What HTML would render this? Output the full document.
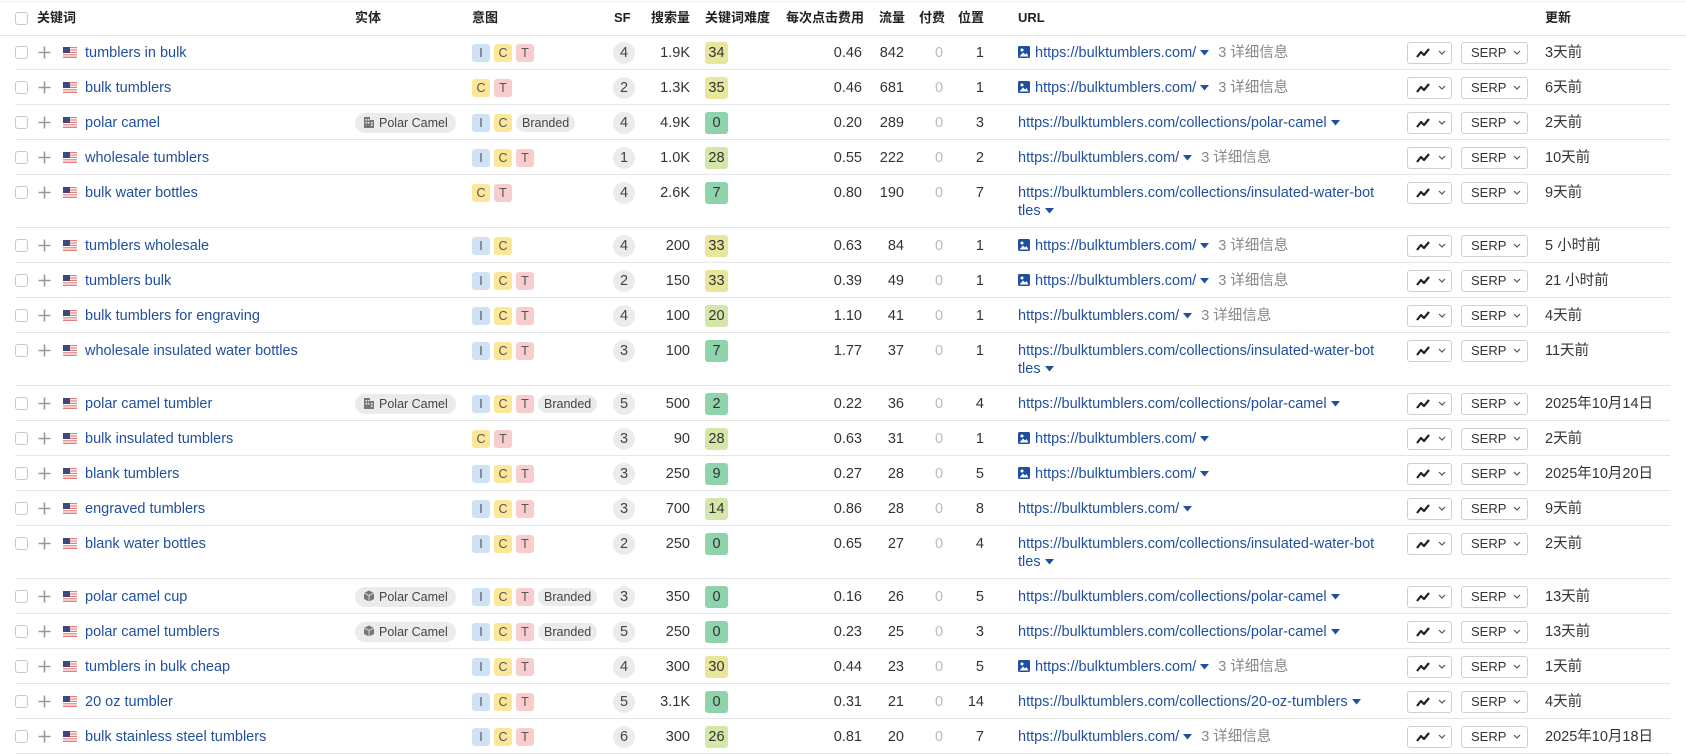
<!DOCTYPE html>
<html><head><meta charset="utf-8">
<style>
*{margin:0;padding:0;box-sizing:border-box}
body{width:1686px;height:756px;background:#fff;font-family:"Liberation Sans","Noto Sans CJK SC",sans-serif;font-size:14.5px;color:#333;position:relative;overflow:hidden}
.a{position:absolute;white-space:nowrap}
.hd{font-weight:bold;font-size:13px;color:#222;top:9px;line-height:18px}
.cb{position:absolute;width:13px;height:13px;border:1px solid #c8c8c8;border-radius:3px;background:#fff}
.sep{position:absolute;height:1px;background:#e6e6e6}
.kw{color:#1f4f9e}
.pill{position:absolute;height:18px;border-radius:3px;font-size:12.5px;line-height:18px;text-align:center;color:#555}
.pI{background:#cfe1f5}.pC{background:#fbe797}.pT{background:#f8cdcd}
.br{background:#ebebeb;border-radius:9px;padding:0 6px;color:#444}
.ent{position:absolute;height:20px;background:#ebebeb;border-radius:10px;font-size:12.5px;line-height:20px;color:#444;padding-left:24px;width:101px}
.sf{position:absolute;width:22px;height:22px;border-radius:11px;background:#ebebeb;text-align:center;line-height:22px;color:#444}
.kd{position:absolute;width:23px;height:22px;border-radius:3px;text-align:center;line-height:22px;color:#333}
.r{text-align:right}
.url{color:#1f4f9e;line-height:18px}
.det{color:#888}
.btn{position:absolute;height:22px;border:1px solid #cfcfcf;border-radius:3px;background:#fff;font-size:13px;line-height:20px;color:#333}
</style></head><body>
<div class="sep" style="left:0;top:1px;width:1686px;background:#eee"></div>
<div class="cb" style="left:15px;top:12px"></div>
<div class="a hd" style="left:37px">关键词</div>
<div class="a hd" style="left:355px">实体</div>
<div class="a hd" style="left:472px">意图</div>
<div class="a hd" style="left:614px">SF</div>
<div class="a hd" style="left:651px">搜索量</div>
<div class="a hd" style="left:705px">关键词难度</div>
<div class="a hd" style="left:786px">每次点击费用</div>
<div class="a hd" style="left:879px">流量</div>
<div class="a hd" style="left:919px">付费</div>
<div class="a hd" style="left:958px">位置</div>
<div class="a hd" style="left:1018px">URL</div>
<div class="a hd" style="left:1545px">更新</div>
<div class="sep" style="left:0;top:35px;width:1686px"></div>
<div id="t"></div>
<script>
var H="https://bulktumblers.com/";
var rows=[
["tumblers in bulk",0,"ICT",0,4,"1.9K",34,"0.46",842,1,"A","3天前"],
["bulk tumblers",0,"CT",0,2,"1.3K",35,"0.46",681,1,"A","6天前"],
["polar camel",1,"IC",1,4,"4.9K",0,"0.20",289,3,"P","2天前"],
["wholesale tumblers",0,"ICT",0,1,"1.0K",28,"0.55",222,2,"C","10天前"],
["bulk water bottles",0,"CT",0,4,"2.6K",7,"0.80",190,7,"L","9天前"],
["tumblers wholesale",0,"IC",0,4,"200",33,"0.63",84,1,"A","5 小时前"],
["tumblers bulk",0,"ICT",0,2,"150",33,"0.39",49,1,"A","21 小时前"],
["bulk tumblers for engraving",0,"ICT",0,4,"100",20,"1.10",41,1,"C","4天前"],
["wholesale insulated water bottles",0,"ICT",0,3,"100",7,"1.77",37,1,"L","11天前"],
["polar camel tumbler",1,"ICT",1,5,"500",2,"0.22",36,4,"P","2025年10月14日"],
["bulk insulated tumblers",0,"CT",0,3,"90",28,"0.63",31,1,"B","2天前"],
["blank tumblers",0,"ICT",0,3,"250",9,"0.27",28,5,"B","2025年10月20日"],
["engraved tumblers",0,"ICT",0,3,"700",14,"0.86",28,8,"D","9天前"],
["blank water bottles",0,"ICT",0,2,"250",0,"0.65",27,4,"L","2天前"],
["polar camel cup",2,"ICT",1,3,"350",0,"0.16",26,5,"P","13天前"],
["polar camel tumblers",2,"ICT",1,5,"250",0,"0.23",25,3,"P","13天前"],
["tumblers in bulk cheap",0,"ICT",0,4,"300",30,"0.44",23,5,"A","1天前"],
["20 oz tumbler",0,"ICT",0,5,"3.1K",0,"0.31",21,14,"O","4天前"],
["bulk stainless steel tumblers",0,"ICT",0,6,"300",26,"0.81",20,7,"C","2025年10月18日"]];
var flag='<svg width="14" height="11" viewBox="0 0 14 11"><rect width="14" height="11" fill="#fff"/><g fill="#d9534f" opacity=".75"><rect y="0" width="14" height="1.2"/><rect y="2.4" width="14" height="1.2"/><rect y="4.8" width="14" height="1.2"/><rect y="7.2" width="14" height="1.2"/><rect y="9.6" width="14" height="1.4"/></g><rect width="7" height="6" fill="#3b4a7a"/></svg>';
var plus='<svg width="13" height="13" viewBox="0 0 13 13"><path d="M6.5 0.5v12M0.5 6.5h12" stroke="#999" stroke-width="1.6"/></svg>';
var img='<svg width="12" height="12" viewBox="0 0 12 12" style="vertical-align:-1px;margin-right:5px"><rect width="12" height="12" rx="1.5" fill="#1f4f9e"/><circle cx="4" cy="4" r="1.5" fill="#fff"/><path d="M1.5 10.5l3.5-4 2 2 1.5-1.5 2 3.5z" fill="#fff"/></svg>';
var car='<svg width="9" height="6" viewBox="0 0 9 6" style="margin-left:4px;vertical-align:1px"><path d="M0 0h9L4.5 5.5z" fill="#1f4f9e"/></svg>';
var bld='<svg width="12" height="12" viewBox="0 0 12 12"><path d="M1 12V1h6v3h4v8zM2.5 3h1.5v1.5H2.5zM4.8 3h1.5v1.5H4.8zM2.5 6h1.5v1.5H2.5zM4.8 6h1.5v1.5H4.8zM8 6h1.5v1.5H8zM8 8.5h1.5V10H8z" fill="#777" fill-rule="evenodd"/></svg>';
var cube='<svg width="12" height="12" viewBox="0 0 12 12"><path d="M6 0.5l5 2.5v6l-5 2.5-5-2.5v-6z" fill="#777"/><path d="M1 3l5 2.5 5-2.5M6 5.5v6" stroke="#ebebeb" stroke-width=".8" fill="none"/></svg>';
var chart='<svg width="14" height="10" viewBox="0 0 14 10"><path d="M1 9l4-5 3 3 5-6" stroke="#222" stroke-width="2.2" fill="none" stroke-linejoin="round"/></svg>';
var chev='<svg width="8" height="5" viewBox="0 0 8 5" style="vertical-align:2px"><path d="M1 1l3 3 3-3" stroke="#555" stroke-width="1.2" fill="none"/></svg>';
function kdc(k){return k>=30?"#e8e69a":(k>=10?"#d4e7a8":"#8fd3aa")}
var o="",y=35;
rows.forEach(function(r){
 var dbl=r[10]=="L",h=dbl?53:35,c=y+17.5;
 o+='<div class="cb" style="left:15px;top:'+(c-7)+'px"></div>';
 o+='<div class="a" style="left:38px;top:'+(c-6.5)+'px;line-height:0">'+plus+'</div>';
 o+='<div class="a" style="left:63px;top:'+(c-5.5)+'px;line-height:0">'+flag+'</div>';
 o+='<div class="a kw" style="left:85px;top:'+(c-9)+'px;line-height:18px">'+r[0]+'</div>';
 if(r[1]) o+='<div class="ent" style="left:355px;top:'+(c-10)+'px"><span style="position:absolute;left:8px;top:3px;line-height:0">'+(r[1]==1?bld:cube)+'</span>Polar Camel</div>';
 var x=472;
 for(var i=0;i<r[2].length;i++){var ch=r[2][i];o+='<div class="pill p'+ch+'" style="left:'+x+'px;top:'+(c-9)+'px;width:18px">'+ch+'</div>';x+=22;}
 if(r[3]) o+='<div class="pill br" style="left:'+x+'px;top:'+(c-9)+'px">Branded</div>';
 o+='<div class="sf" style="left:613px;top:'+(c-11)+'px">'+r[4]+'</div>';
 o+='<div class="a r" style="right:'+(1686-690)+'px;top:'+(c-9)+'px;line-height:18px">'+r[5]+'</div>';
 o+='<div class="kd" style="left:705px;top:'+(c-11)+'px;background:'+kdc(r[6])+'">'+r[6]+'</div>';
 o+='<div class="a r" style="right:'+(1686-862)+'px;top:'+(c-9)+'px;line-height:18px">'+r[7]+'</div>';
 o+='<div class="a r" style="right:'+(1686-904)+'px;top:'+(c-9)+'px;line-height:18px">'+r[8]+'</div>';
 o+='<div class="a" style="left:935px;top:'+(c-9)+'px;line-height:18px;color:#bbb">0</div>';
 o+='<div class="a r" style="right:'+(1686-984)+'px;top:'+(c-9)+'px;line-height:18px">'+r[9]+'</div>';
 var u,t=r[10],det=' <span class="det" style="margin-left:5px">3 详细信息</span>';
 if(t=="A")u=img+H+car+det;else if(t=="B")u=img+H+car;else if(t=="C")u=H+car+det;else if(t=="D")u=H+car;
 else if(t=="P")u=H+"collections/polar-camel"+car;else if(t=="O")u=H+"collections/20-oz-tumblers"+car;
 else u=H+"collections/insulated-water-bot<br>tles"+car;
 o+='<div class="a url" style="left:1018px;top:'+(c-9)+'px">'+u+'</div>';
 o+='<div class="btn" style="left:1407px;width:45px;top:'+(c-11)+'px;padding-left:8px"><span style="line-height:0;vertical-align:-1px">'+chart+'</span> <span style="margin-left:4px">'+chev+'</span></div>';
 o+='<div class="btn" style="left:1461px;width:67px;top:'+(c-11)+'px;padding-left:9px">SERP <span style="margin-left:3px">'+chev+'</span></div>';
 o+='<div class="a" style="left:1545px;top:'+(c-9)+'px;line-height:18px">'+r[11]+'</div>';
 y+=h;
 o+='<div class="sep" style="left:15px;top:'+(y-1)+'px;width:1655px"></div>';
});
document.getElementById("t").innerHTML=o;
</script>
</body></html>
